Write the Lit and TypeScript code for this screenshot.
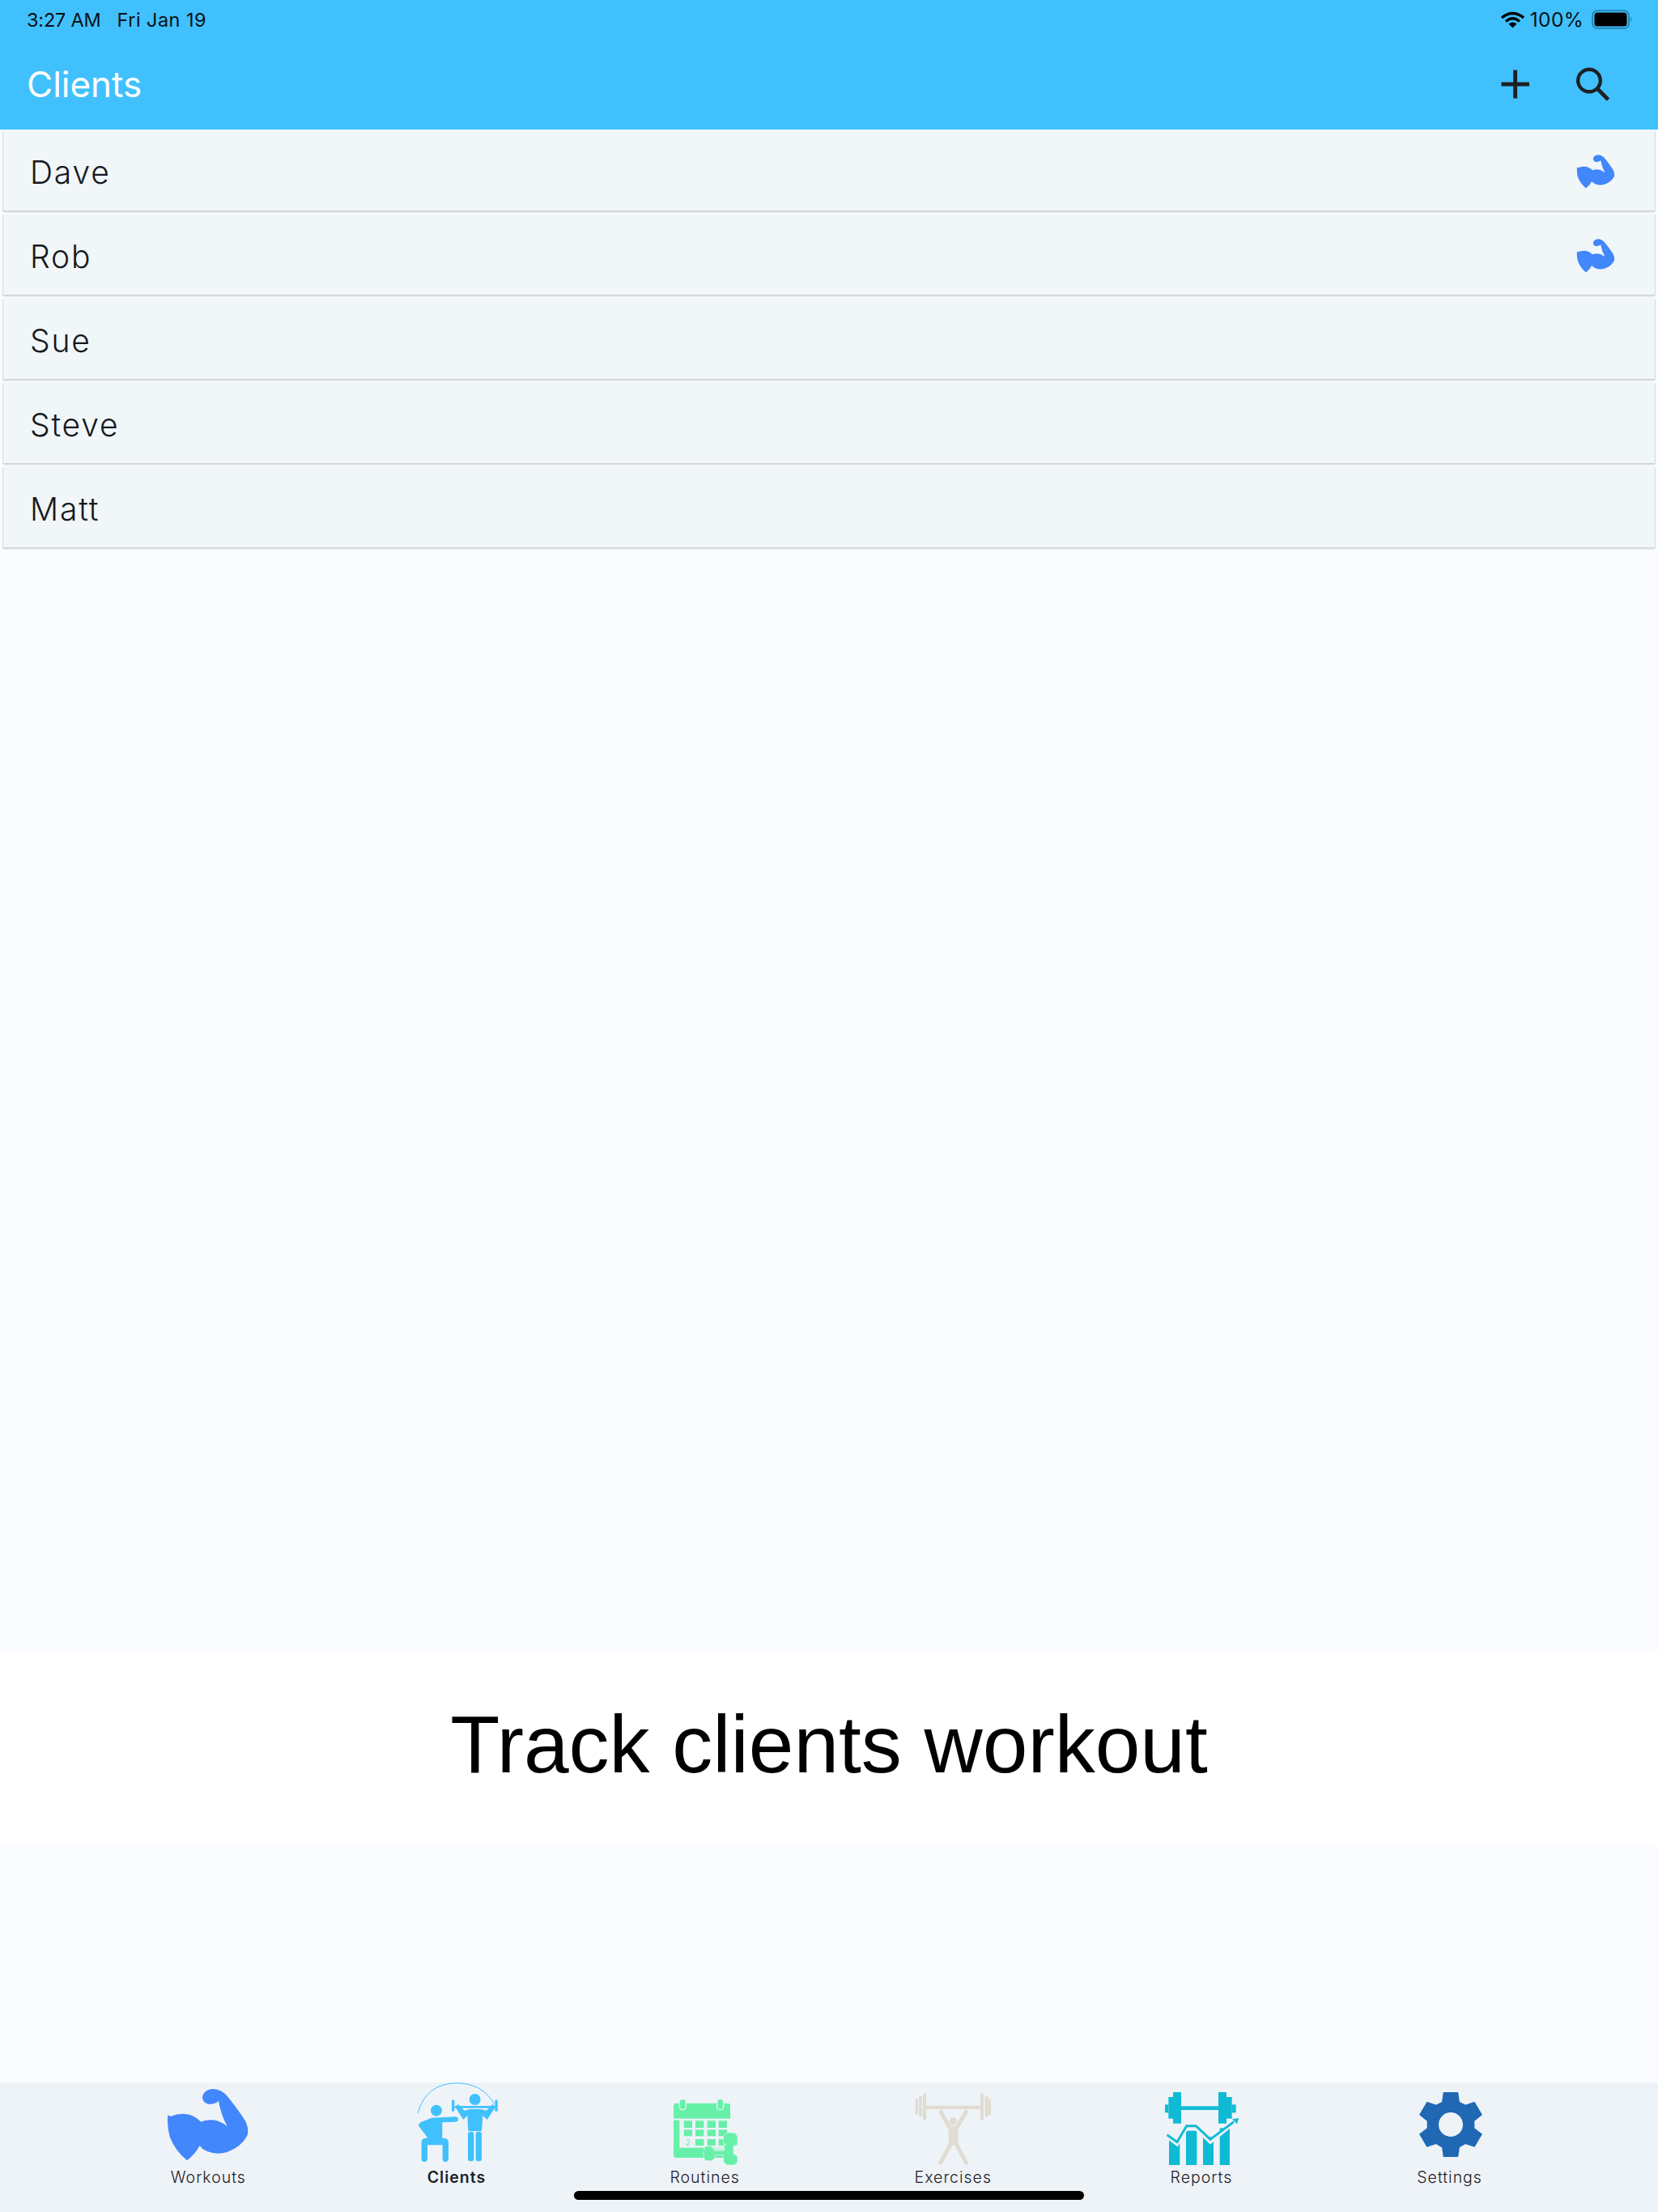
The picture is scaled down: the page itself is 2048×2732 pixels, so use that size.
import { LitElement, html, css, svg } from "lit";
import { customElement } from "lit/decorators.js";

const BG = "#eef3f8";

const muscleShape = svg`<path d="M112 157 L122 162 Q150 150 178 153 Q210 157 235 182 Q265 170 295 178 Q320 188 333 200 Q310 160 300 105 Q285 118 262 116 Q240 110 240 90 Q245 62 280 60 Q310 60 335 90 Q375 140 400 180 Q415 215 405 235 Q385 275 330 295 Q290 305 260 292 Q240 285 230 270 Q215 300 183 325 Q140 290 120 240 Q108 200 112 157 Z" fill="#4287fb"/>`;

const clientsShape = svg`
  <g fill="#40c1fd" stroke="none">
    <circle cx="204" cy="140" r="21"/>
    <circle cx="347" cy="99" r="21"/>
    <path d="M186 167 L276 163 Q286 165 285 173 Q284 181 274 182 L226 184 L226 242 L238 243 Q249 247 249 258 L249 320 Q247 330 238 330 Q228 330 227 320 L227 268 L171 268 L171 320 Q169 330 160 330 Q150 330 149 320 L149 256 Q150 246 160 243 L172 241 L138 197 Q138 188 146 184 Z"/>
    <rect x="261" y="101" width="10" height="42"/>
    <rect x="421" y="101" width="10" height="42"/>
    <rect x="272" y="123" width="150" height="8"/>
    <path d="M273 125 L285 117 L308 140 L328 135 L367 135 L390 140 L412 117 L424 125 L392 174 L376 158 L372 216 L322 216 L319 158 L304 174 Z"/>
    <rect x="321" y="218" width="22" height="110" rx="9"/>
    <rect x="350" y="218" width="22" height="110" rx="9"/>
  </g>
  <path d="M135 150 Q165 40 280 38 Q375 40 418 115" fill="none" stroke="#40c1fd" stroke-width="3"/>
`;

const routinesShape = svg`
  <g fill="#66f0a8">
    <rect x="153" y="113" width="210" height="202" rx="10"/>
    <rect x="175" y="175" width="188" height="103" fill="${BG}"/>
    <rect x="153" y="170" width="210" height="6" fill="${BG}"/>
    <rect x="191" y="178" width="31" height="26"/><rect x="234" y="178" width="31" height="26"/><rect x="278" y="178" width="31" height="26"/><rect x="320" y="178" width="31" height="26"/>
    <rect x="191" y="211" width="31" height="24"/><rect x="234" y="211" width="31" height="24"/><rect x="278" y="211" width="31" height="24"/><rect x="320" y="211" width="31" height="24"/>
    <rect x="234" y="246" width="31" height="24"/><rect x="278" y="246" width="31" height="24"/><rect x="320" y="246" width="22" height="24"/>
    <text x="197" y="270" font-family="Inter, sans-serif" font-size="30">2</text>
    <rect x="175" y="97" width="24" height="40" rx="11" stroke="${BG}" stroke-width="4"/>
    <rect x="314" y="97" width="24" height="40" rx="11" stroke="${BG}" stroke-width="4"/>
    <path d="M272 272 H295 V280 H305 V290 H340 V267 H348 L338 262 V235 L350 222 H380 L390 235 V268 L375 272 V300 L390 310 V333 L378 342 H350 L338 330 V305 H305 V318 L295 326 H272 L265 316 V282 Z" stroke="${BG}" stroke-width="2"/>
    <rect x="305" y="280" width="36" height="6" fill="${BG}"/>
  </g>
`;

const exercisesShape = svg`
  <g fill="#e0dcd2">
    <rect x="122" y="96" width="10" height="58"/><rect x="135" y="88" width="12" height="74"/><rect x="150" y="78" width="12" height="96"/>
    <rect x="363" y="78" width="12" height="96"/><rect x="380" y="88" width="12" height="74"/><rect x="392" y="98" width="10" height="58"/>
    <rect x="160" y="122" width="205" height="13"/>
    <circle cx="262" cy="180" r="14"/>
    <rect x="245" y="197" width="36" height="72" rx="8"/>
  </g>
  <g stroke="#e0dcd2" stroke-width="15" stroke-linecap="round" fill="none">
    <path d="M216 145 L252 208"/><path d="M310 145 L273 208"/>
    <path d="M272 262 L311 334"/><path d="M254 262 L215 334"/>
  </g>
`;

const reportsShape = svg`
  <g fill="#0fbbd4">
    <rect x="147" y="72" width="30" height="116"/><rect x="130" y="90" width="17" height="80"/><rect x="117" y="118" width="13" height="30"/>
    <rect x="315" y="72" width="30" height="116"/><rect x="345" y="90" width="20" height="80"/><rect x="365" y="118" width="15" height="30"/>
    <rect x="177" y="124" width="138" height="14"/>
    <rect x="132" y="250" width="40" height="92"/><rect x="195" y="215" width="40" height="127"/><rect x="258" y="238" width="39" height="104"/><rect x="320" y="205" width="37" height="137"/>
  </g>
  <path d="M125 236 L162 264 L197 206 L232 206 L285 256 L372 186" fill="none" stroke="${BG}" stroke-width="14"/>
  <path d="M125 230 L162 257 L197 197 L232 197 L285 247 L372 182" fill="none" stroke="#0fbbd4" stroke-width="9"/>
  <path d="M366 172 L390 168 L384 190 Z" fill="#0fbbd4"/>
`;

const settingsShape = svg`<path fill-rule="evenodd" stroke="#2068b4" stroke-width="6" stroke-linejoin="round" fill="#2068b4"
  d="M248 75 L243 110 L219 122 L186 111 L160 155 L188 178 L188 206 L160 228 L186 272 L219 261 L243 275 L248 309 L298 309 L303 275 L327 261 L360 272 L386 228 L358 206 L358 178 L386 155 L360 111 L327 122 L303 110 L298 75 Z
  M273 146 A46 46 0 1 0 273 238 A46 46 0 1 0 273 146 Z"/><circle cx="273" cy="192" r="45" fill="${BG}"/>`;

@customElement("app-root")
export class AppRoot extends LitElement {
  static styles = css`
    :host { display: block; width: 2048px; height: 2732px; font-family: Inter, "Liberation Sans", sans-serif; }
    .app { height: 2732px; display: flex; flex-direction: column; background: #fafcff; position: relative; }
    .top { background: #40c1fd; height: 160px; display: flex; flex-direction: column; flex: none; }
    .status { height: 48px; display: flex; align-items: center; padding: 0 33px; font-size: 23.5px; color: #0b0f12; }
    .time { margin-right: 20px; letter-spacing: -0.2px; }
    .date { letter-spacing: 0.45px; }
    .pct { font-size: 24.5px; letter-spacing: 0.3px; }
    .grow { flex: 1; }
    .wifi { width: 29px; height: 21px; margin-right: 7px; }
    .batt { width: 50px; height: 24px; margin-left: 10px; margin-right: -1px; }
    .bar { flex: 1; display: flex; align-items: center; padding: 0 57px 0 33px; }
    .title { flex: 1; font-size: 44px; color: #fff; }
    .act { width: 48px; height: 48px; display: block; }
    .act + .act { margin-left: 47px; }
    .list { padding: 1px 4px 0; display: flex; flex-direction: column; gap: 4px; flex: none; }
    .row { height: 100px; background: #f1f6f9; border-bottom: 1px solid #d0d3d5; box-shadow: 0 1px 2px rgba(0,0,0,.18), -1px 0 0 #e6eaec, 1px 0 0 #e6eaec; display: flex; align-items: center; padding: 3px 49px 0 33px; font-size: 39px; font-weight: 300; letter-spacing: 1.8px; color: #15191d; box-sizing: border-box; }
    .row span { flex: 1; }
    .row svg { width: 48px; height: 42px; display: block; }
    .space { flex: 1; }
    .band { height: 236px; flex: none; background: #fff; display: flex; align-items: center; justify-content: center; padding-bottom: 9px; box-sizing: border-box; font-family: "Liberation Sans", Arial, sans-serif; font-size: 100px; color: #000; }
    .under { height: 295px; flex: none; }
    .tabs { height: 160px; flex: none; background: ${css([BG] as any)}; display: grid; grid-template-columns: repeat(6, 306.67px); padding: 0 104px; box-sizing: border-box; position: relative; }
    .tab { display: flex; flex-direction: column; align-items: center; }
    .tab svg { width: 120px; height: 100px; display: block; }
    .tab span { font-size: 19.5px; font-weight: 300; letter-spacing: 1px; color: #1d2125; line-height: 24px; margin-top: 5px; }
    .tab.on span { font-weight: 600; }
    .home { position: absolute; left: 709px; top: 134px; width: 630px; height: 11px; border-radius: 6px; background: #000; }
  `;

  private tabs = [
    { label: "Workouts", vx: 81, shape: muscleShape, on: false },
    { label: "Clients", vx: 99, shape: clientsShape, on: true },
    { label: "Routines", vx: 90, shape: routinesShape, on: false },
    { label: "Exercises", vx: 81, shape: exercisesShape, on: false },
    { label: "Reports", vx: 72, shape: reportsShape, on: false },
    { label: "Settings", vx: 90, shape: settingsShape, on: false },
  ];

  private rows = [
    { n: "Dave", icon: true },
    { n: "Rob", icon: true },
    { n: "Sue", icon: false },
    { n: "Steve", icon: false },
    { n: "Matt", icon: false },
  ];

  render() {
    return html`<div class="app">
      <div class="top">
        <div class="status">
          <span class="time">3:27 AM</span><span class="date">Fri Jan 19</span><span class="grow"></span>
          <svg class="wifi" viewBox="0 0 29 21"><path d="M1 8 Q14.5 -3 28 8" fill="none" stroke="#000" stroke-width="3.4"/><path d="M6 12.5 Q14.5 5 23 12.5" fill="none" stroke="#000" stroke-width="3.4"/><path d="M9.5 15.5 L14.5 20.5 L19.5 15.5 Q14.5 11.5 9.5 15.5 Z" fill="#000"/></svg>
          <span class="pct">100%</span>
          <svg class="batt" viewBox="0 0 50 24"><rect x="1" y="1" width="45" height="22" rx="6" fill="none" stroke="#1f7ba6" stroke-width="1.6"/><rect x="3.5" y="3.5" width="40" height="17" rx="3.5" fill="#000"/><path d="M48 8.5 Q50.5 12 48 15.5 Z" fill="#1f7ba6"/></svg>
        </div>
        <div class="bar">
          <span class="title">Clients</span>
          <svg class="act" viewBox="0 0 48 48"><path d="M6.5 24 H41 M23.7 6.5 V41.5" stroke="#1c2024" stroke-width="4.8" fill="none"/></svg>
          <svg class="act" viewBox="0 0 48 48"><circle cx="20" cy="19.5" r="13.8" fill="none" stroke="#1c2024" stroke-width="4.4"/><path d="M30 29.5 L43.5 43" stroke="#1c2024" stroke-width="4.8" fill="none"/></svg>
        </div>
      </div>
      <div class="list">
        ${this.rows.map(
          (r) => html`<div class="row"><span>${r.n}</span>${r.icon
            ? html`<svg viewBox="108 58 304 270">${muscleShape}</svg>`
            : ""}</div>`
        )}
      </div>
      <div class="space"></div>
      <div class="band">Track clients workout</div>
      <div class="under"></div>
      <div class="tabs">
        ${this.tabs.map(
          (t) => html`<div class="tab ${t.on ? "on" : ""}">
            <svg viewBox="${t.vx} 36 360 300" style="overflow:visible">${t.shape}</svg>
            <span>${t.label}</span>
          </div>`
        )}
        <div class="home"></div>
      </div>
    </div>`;
  }
}
